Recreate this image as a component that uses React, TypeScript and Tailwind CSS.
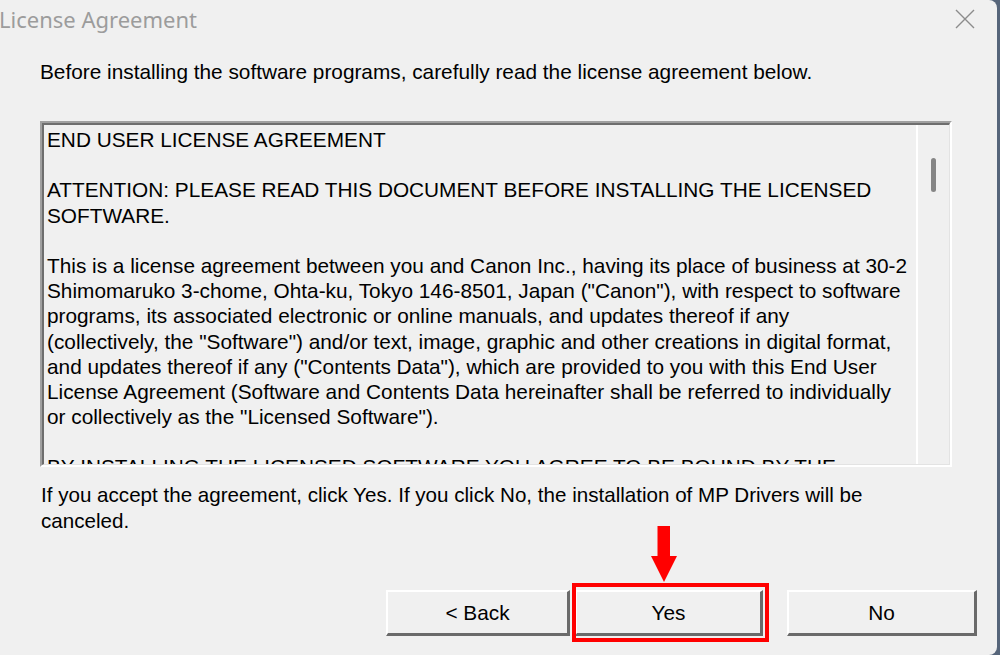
const licenseLines = [
  'END USER LICENSE AGREEMENT',
  '',
  'ATTENTION: PLEASE READ THIS DOCUMENT BEFORE INSTALLING THE LICENSED',
  'SOFTWARE.',
  '',
  'This is a license agreement between you and Canon Inc., having its place of business at 30-2',
  'Shimomaruko 3-chome, Ohta-ku, Tokyo 146-8501, Japan ("Canon"), with respect to software',
  'programs, its associated electronic or online manuals, and updates thereof if any',
  '(collectively, the "Software") and/or text, image, graphic and other creations in digital format,',
  'and updates thereof if any ("Contents Data"), which are provided to you with this End User',
  'License Agreement (Software and Contents Data hereinafter shall be referred to individually',
  'or collectively as the "Licensed Software").',
  '',
  'BY INSTALLING THE LICENSED SOFTWARE YOU AGREE TO BE BOUND BY THE',
];

function WinButton({ label, width }: { label: string; width: string }) {
  return (
    <button
      className={`${width} h-[46px] bg-[#f0f0f0] border-t-2 border-l-2 border-t-white border-l-white border-b-[3px] border-r-[3px] border-b-[#6a6a6a] border-r-[#6a6a6a] text-[20.8px] text-black flex items-center justify-center`}
    >
      {label}
    </button>
  );
}

export default function App() {
  return (
    <div className="w-[1000px] h-[655px] bg-[#56657a] overflow-hidden font-['Liberation_Sans',Arial,sans-serif]">
      <div className="w-[997px] h-[655px] bg-[#f0f0f0] rounded-r-[8px] flex flex-col">
        {/* Title bar */}
        <div className="h-[38px] flex items-center justify-between shrink-0">
          <span className="font-['Noto_Sans',sans-serif] text-[22px] text-[#9c9c9c] -ml-[1px] leading-none">
            License Agreement
          </span>
          <svg width="20" height="20" viewBox="0 0 20 20" className="mr-[22px]">
            <path d="M1 1 L19 19 M19 1 L1 19" stroke="#8c8c8c" strokeWidth="1.4" fill="none" />
          </svg>
        </div>

        <p className="mt-[22px] ml-[40px] text-[20.8px] leading-[24px] text-black whitespace-nowrap">
          Before installing the software programs, carefully read the license agreement below.
        </p>

        {/* License text box */}
        <div className="mt-[37px] ml-[40px] w-[912px] h-[346px] shrink-0 border-t-2 border-l-2 border-t-[#a0a0a0] border-l-[#a0a0a0] border-b-2 border-r-2 border-b-white border-r-white">
          <div className="w-full h-full flex border-t-2 border-l-2 border-t-[#6e6e6e] border-l-[#6e6e6e] border-b border-r border-b-[#e3e3e3] border-r-[#e3e3e3]">
            <div className="flex-1 overflow-hidden pl-[3px] pt-[2px] text-[20.8px] leading-[25.2px] text-black">
              {licenseLines.map((line, i) => (
                <div key={i} className="whitespace-pre h-[25.2px]">
                  {line || ' '}
                </div>
              ))}
            </div>
            <div className="w-[33px] shrink-0 border-l-2 border-l-white flex justify-center pt-[33px]">
              <div className="w-[5px] h-[34px] rounded-full bg-[#858585]" />
            </div>
          </div>
        </div>

        <div className="mt-[15px] ml-[41px] text-[20.6px] leading-[26px] text-black">
          <div className="whitespace-nowrap">
            If you accept the agreement, click Yes. If you click No, the installation of MP Drivers will be
          </div>
          <div>canceled.</div>
        </div>

        {/* Buttons */}
        <div className="mt-[56px] flex justify-end pr-[20px]">
          <WinButton label="< Back" width="w-[184px]" />
          <div className="relative ml-[5px]">
            <WinButton label="Yes" width="w-[188px]" />
            <div className="absolute -left-[3px] -top-[7px] -right-[6px] -bottom-[6px] border-4 border-[#ff0000]" />
            <svg
              className="absolute left-[76px] -top-[64px]"
              width="26"
              height="56"
              viewBox="0 0 26 56"
            >
              <path d="M6.5 0 H19 V30 H26 L13 56 L0 30 H6.5 Z" fill="#ff0000" />
            </svg>
          </div>
          <div className="ml-[24px]">
            <WinButton label="No" width="w-[190px]" />
          </div>
        </div>
      </div>
    </div>
  );
}
